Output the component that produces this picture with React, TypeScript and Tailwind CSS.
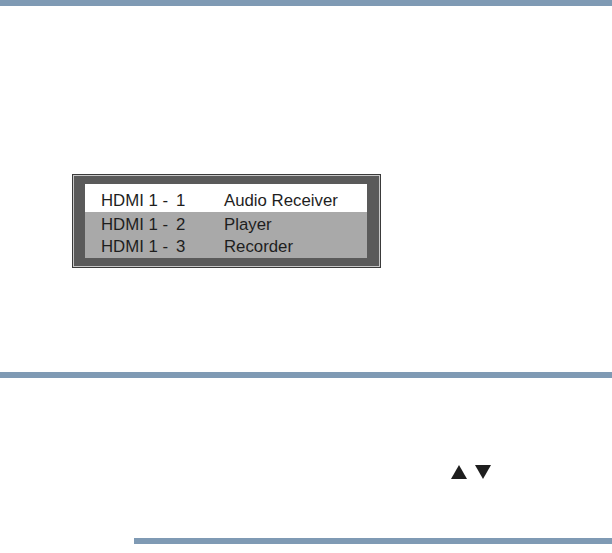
export default function App() {
  const rows = [
    { n: "1", name: "Audio Receiver" },
    { n: "2", name: "Player" },
    { n: "3", name: "Recorder" },
  ];
  const Row = ({ n, name }: { n: string; name: string }) => (
    <div className="flex whitespace-pre leading-[22px]">
      <span className="w-[75px]">HDMI 1 -</span>
      <span className="w-[48px]">{n}</span>
      <span>{name}</span>
    </div>
  );
  return (
    <div className="relative w-[612px] h-[553px] bg-white overflow-hidden" style={{ fontFamily: '"Liberation Sans", Arial, sans-serif' }}>
      <div className="h-[6px] bg-[#7f9ab4]" />
      <div className="pt-[168px] pl-[72px]">
        <div className="w-[309px] border border-[#3a3a3a] bg-[#c8c8c8] p-px">
          <div className="bg-[#5a5a5a] pt-[8px] pb-[8px] pl-[11px] pr-[12px]">
            <div className="text-[16.8px] text-[#1e1e1e]">
              <div className="h-[28px] bg-white pt-[6px] pl-[16px]">
                <Row {...rows[0]} />
              </div>
              <div className="h-[46px] bg-[#a9a9a9] pt-[2px] pl-[16px]">
                <Row {...rows[1]} />
                <Row {...rows[2]} />
              </div>
            </div>
          </div>
        </div>
      </div>
      <div className="mt-[104px] h-[6px] bg-[#7f9ab4]" />
      <div className="mt-[87px] pl-[451px] flex gap-[8px]">
        <svg width="16" height="14" viewBox="0 0 16 14"><polygon points="8,0 16,14 0,14" fill="#1e1e1e" /></svg>
        <svg width="16" height="14" viewBox="0 0 16 14"><polygon points="0,0 16,0 8,14" fill="#1e1e1e" /></svg>
      </div>
      <div className="mt-[59px] ml-[134px] h-[6px] bg-[#7f9ab4]" />
    </div>
  );
}
